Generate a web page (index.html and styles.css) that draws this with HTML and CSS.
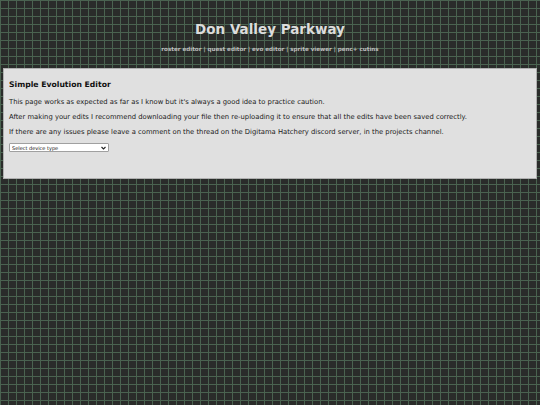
FILE: index.html
```html
<!DOCTYPE html>
<html lang="en">
<head>
    <meta charset="UTF-8">
    <meta name="viewport" content="width=device-width, initial-scale=1.0">
    <title>Don Valley Parkway</title>
    <link rel="stylesheet" href="styles.css">
</head>
<body>
    <header class="site-header">
        <h1>Don Valley Parkway</h1>
        <nav class="nav">
            <a href="#">roster editor</a> | <a href="#">quest editor</a> | <a href="#">evo editor</a> | <a href="#">sprite viewer</a> | <a href="#">penc+ cutins</a>
        </nav>
    </header>

    <div class="panel">
        <h2>Simple Evolution Editor</h2>
        <p>This page works as expected as far as I know but it's always a good idea to practice caution.</p>
        <p>After making your edits I recommend downloading your file then re-uploading it to ensure that all the edits have been saved correctly.</p>
        <p>If there are any issues please leave a comment on the thread on the Digitama Hatchery discord server, in the projects channel.</p>
        <div class="select-wrap">
            <select class="device-select">
                <option>Select device type</option>
                <option>Pendulum Color</option>
                <option>DMC</option>
            </select>
            <svg class="select-arrow" width="5" height="4" viewBox="0 0 5 4"><path d="M0.5 1 L2.5 3 L4.5 1" fill="none" stroke="#222" stroke-width="1.1"/></svg>
        </div>
    </div>
</body>
</html>
```

FILE: styles.css
```css
body {
    margin: 0;
    padding: 0 3px;
    font-family: "DejaVu Sans", Verdana, sans-serif;
    background-color: #2a2c2a;
    background-image:
        linear-gradient(to right, #4a6350 1px, transparent 1px),
        linear-gradient(to bottom, #4a6350 1px, transparent 1px);
    background-size: 8px 8px;
    min-height: 405px;
}
.site-header {
    text-align: center;
    padding-top: 21px;
    height: 68px;
    box-sizing: border-box;
}
.site-header h1 {
    margin: 0;
    font-size: 13.5px;
    line-height: 16px;
    color: #dcdcdc;
}
.nav {
    margin-top: 8px;
    font-size: 5.6px;
    font-weight: bold;
    line-height: 8px;
    color: #bdbdbd;
}
.nav a {
    color: #bdbdbd;
    text-decoration: none;
}
.panel {
    background: #e0e0e0;
    border: 1px solid #b0b0b0;
    padding: 10px 5px 26px;
    color: #1a1a1a;
    font-size: 6.8px;
}
.panel h2 {
    margin: 0 0 7px;
    font-size: 7.7px;
    line-height: 12px;
    color: #111;
}
.panel p {
    margin: 0 0 6px;
    font-size: 6.8px;
    line-height: 9px;
}
.select-wrap {
    position: relative;
    width: 100px;
    height: 9px;
}
.device-select {
    display: block;
    width: 100px;
    height: 9px;
    font-size: 5px;
    font-family: "DejaVu Sans", Verdana, sans-serif;
    padding: 0 0 0 2px;
    border: 1px solid #a0a0a0;
    border-radius: 1px;
    background: #fff;
    color: #111;
    appearance: none;
    -webkit-appearance: none;
}
.select-arrow {
    position: absolute;
    right: 3px;
    top: 3px;
}
```
